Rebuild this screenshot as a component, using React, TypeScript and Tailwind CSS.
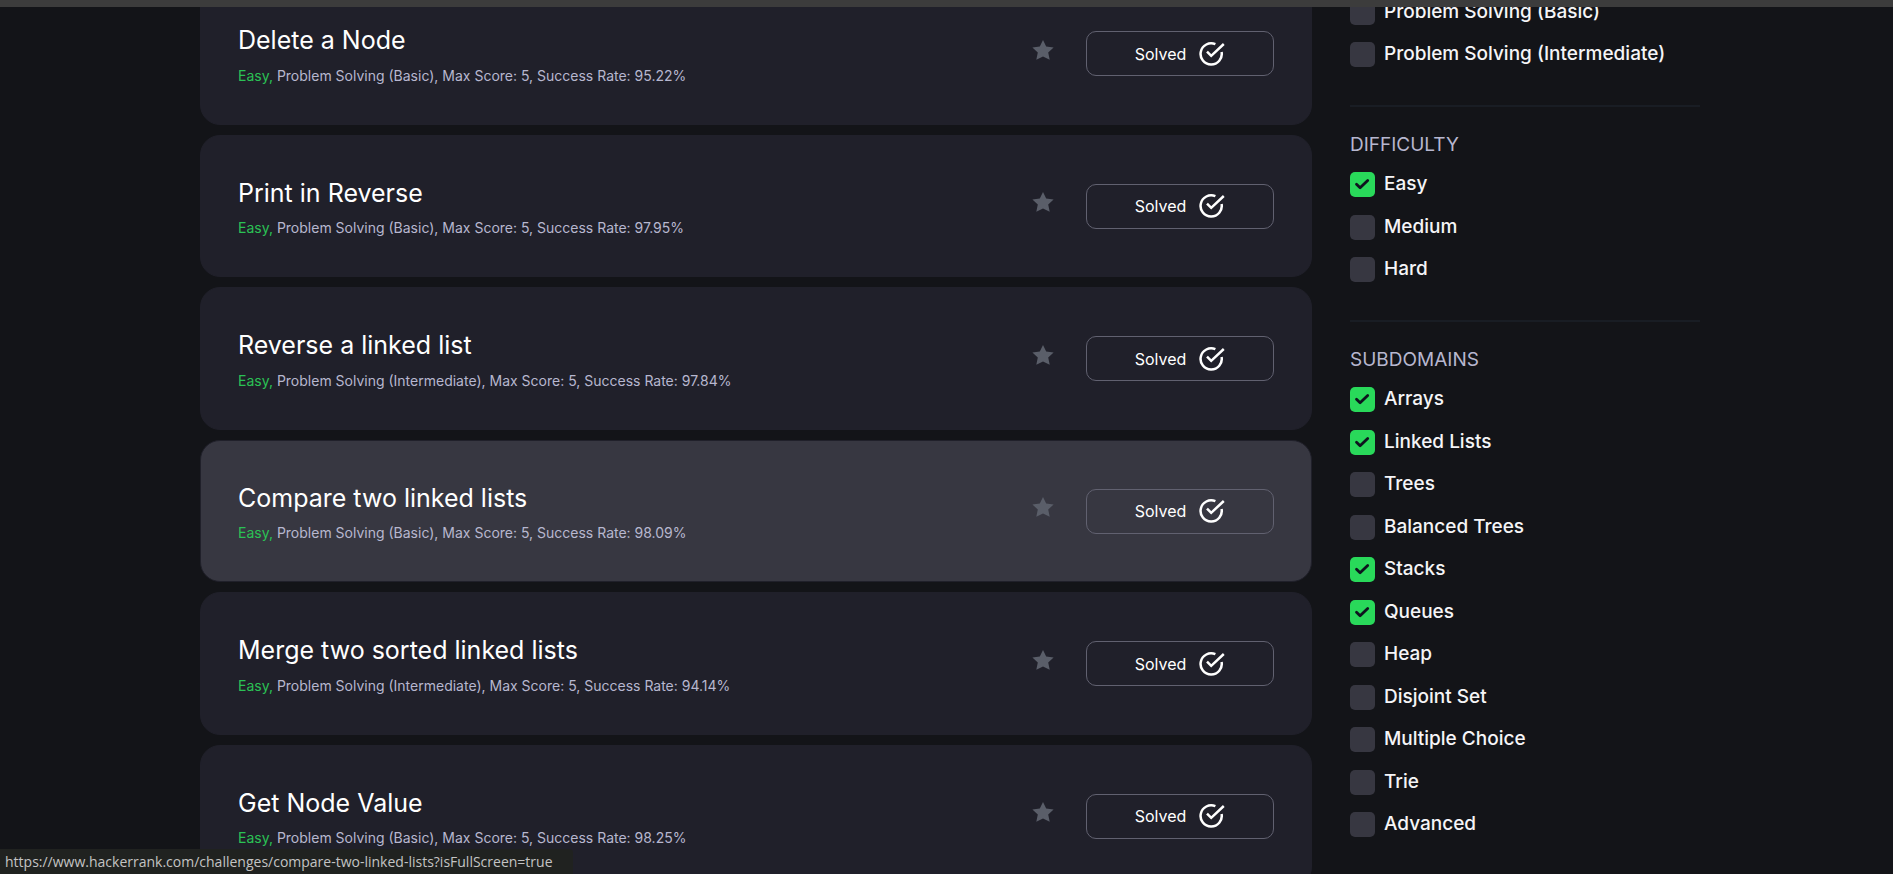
import React from "react";

type Challenge = { title: string; skill: string; rate: string; active?: boolean };

const challenges: Challenge[] = [
  { title: "Delete a Node", skill: "Problem Solving (Basic)", rate: "95.22%" },
  { title: "Print in Reverse", skill: "Problem Solving (Basic)", rate: "97.95%" },
  { title: "Reverse a linked list", skill: "Problem Solving (Intermediate)", rate: "97.84%" },
  { title: "Compare two linked lists", skill: "Problem Solving (Basic)", rate: "98.09%", active: true },
  { title: "Merge two sorted linked lists", skill: "Problem Solving (Intermediate)", rate: "94.14%" },
  { title: "Get Node Value", skill: "Problem Solving (Basic)", rate: "98.25%" },
];

type Option = { label: string; checked?: boolean };

const skills: Option[] = [{ label: "Problem Solving (Basic)" }, { label: "Problem Solving (Intermediate)" }];

const difficulty: Option[] = [{ label: "Easy", checked: true }, { label: "Medium" }, { label: "Hard" }];

const subdomains: Option[] = [
  { label: "Arrays", checked: true },
  { label: "Linked Lists", checked: true },
  { label: "Trees" },
  { label: "Balanced Trees" },
  { label: "Stacks", checked: true },
  { label: "Queues", checked: true },
  { label: "Heap" },
  { label: "Disjoint Set" },
  { label: "Multiple Choice" },
  { label: "Trie" },
  { label: "Advanced" },
];

function StarIcon() {
  return (
    <svg viewBox="0 0 22 20" className="h-5 w-[22px]" fill="#5a5e69" aria-hidden="true">
      <path d="M11 0l3.2 6.6 7.4.9-5.4 5.1 1.5 7.2L11 16.6l-6.7 3.2 1.5-7.2L.4 7.5l7.4-.9z" />
    </svg>
  );
}

function SolvedIcon() {
  return (
    <svg viewBox="0 0 26 24" className="h-6 w-[26px]" fill="none" stroke="#fff" strokeWidth="2.5" aria-hidden="true">
      <path d="M16.4 2.2A10.6 10.6 0 1 0 22.6 10" />
      <path d="M8 9.6l4.2 4.2L24.8 2" />
    </svg>
  );
}

function ChallengeCard({ title, skill, rate, active }: Challenge) {
  return (
    <li
      className={`flex items-center rounded-[20px] border border-[#20202a] px-[37px] pt-[39px] pb-[38px] ${
        active ? "bg-[#373741]" : "bg-[#20202a]"
      }`}
    >
      <div className="min-w-0 flex-1">
        <a href="#" className="block text-[25px] leading-normal text-white">
          {title}
        </a>
        <p className="mt-[5px] text-[14px] leading-[21px] text-[#b7b7cf]">
          <span className="text-[#2bc155]">Easy,</span> {skill}, Max Score: 5, Success Rate: {rate}
        </p>
      </div>
      <button type="button" aria-label={`Bookmark ${title}`} className="mr-8 pb-2">
        <StarIcon />
      </button>
      <button
        type="button"
        className="flex h-[45px] w-[188px] items-center justify-center gap-[13px] rounded-[10px] border border-[#616170] text-[16px] text-white"
      >
        Solved
        <SolvedIcon />
      </button>
    </li>
  );
}

function CheckOption({ label, checked }: Option) {
  return (
    <label className="flex h-[25px] items-center gap-[9px] text-[19px] font-medium text-[#f5f5f7]">
      <span className="grid size-[25px]">
        <input
          type="checkbox"
          defaultChecked={checked}
          className="peer col-start-1 row-start-1 size-[25px] appearance-none rounded-[5px] bg-[#373741] checked:bg-[#29d95a]"
        />
        <svg
          viewBox="0 0 25 25"
          className="pointer-events-none invisible col-start-1 row-start-1 size-[25px] peer-checked:visible"
          fill="none"
          stroke="#0e141e"
          strokeWidth="2.8"
          strokeLinecap="round"
          strokeLinejoin="round"
          aria-hidden="true"
        >
          <path d="M6.5 12.2l3.6 3.6 7.6-7.4" />
        </svg>
      </span>
      {label}
    </label>
  );
}

function FilterGroup({ title, options, listClass }: { title: string; options: Option[]; listClass: string }) {
  return (
    <fieldset className="border-b-2 border-[#191d24] pb-[38px] last:border-b-0">
      <legend className="pt-6 text-[19px] leading-[27px] text-[#b7b7cf] uppercase">{title}</legend>
      <div className={`mt-[14px] flex flex-col justify-between ${listClass}`}>
        {options.map((o) => (
          <CheckOption key={o.label} {...o} />
        ))}
      </div>
    </fieldset>
  );
}

export default function App() {
  return (
    <div className="relative h-screen overflow-hidden bg-[#131418] font-[Inter,sans-serif]">
      <div className="relative z-10 h-[7px] bg-[#3c3c3c]" />
      <main className="-mt-[25px] flex items-start gap-[38px] pr-[193px] pl-[200px]">
        <ul className="flex min-w-0 flex-1 flex-col gap-[10px]">
          {challenges.map((c) => (
            <ChallengeCard key={c.title} {...c} />
          ))}
        </ul>
        <aside className="-mt-[47px] w-[350px]">
          <FilterGroup title="Skills" options={skills} listClass="h-[67px]" />
          <FilterGroup title="Difficulty" options={difficulty} listClass="h-[110px]" />
          <FilterGroup title="Subdomains" options={subdomains} listClass="h-[450px]" />
        </aside>
      </main>
      <div className="absolute bottom-0 left-0 h-[25px] rounded-tr-[4px] bg-[#202220] pr-5 pl-[5px] font-['Open_Sans',sans-serif] text-[14px] leading-[25px] text-[#c4c4c4]">
        https://www.hackerrank.com/challenges/compare-two-linked-lists?isFullScreen=true
      </div>
    </div>
  );
}
